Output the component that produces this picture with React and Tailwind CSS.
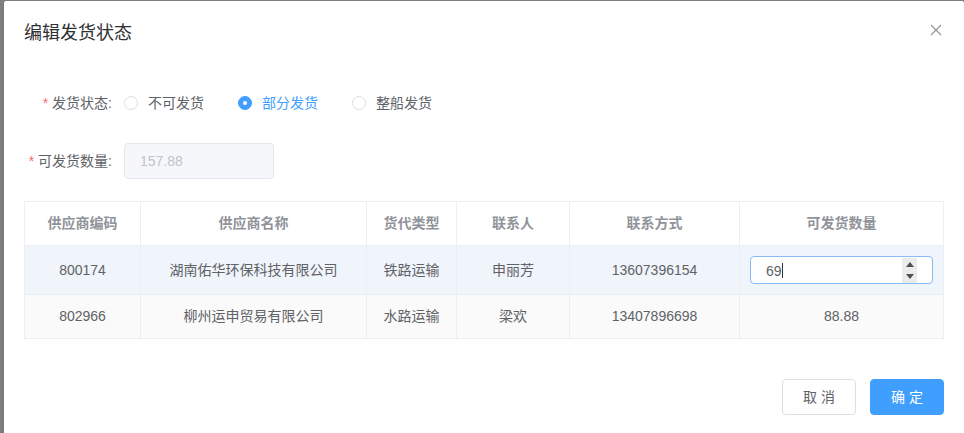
import React, { useState } from 'react';

const rows = [
  { code: '800174', name: '湖南佑华环保科技有限公司', type: '铁路运输', contact: '申丽芳', phone: '13607396154', qty: '69', editing: true },
  { code: '802966', name: '柳州运申贸易有限公司', type: '水路运输', contact: '梁欢', phone: '13407896698', qty: '88.88', editing: false },
];

const options = ['不可发货', '部分发货', '整船发货'];

function Radio({ label, checked, onClick }) {
  return (
    <label onClick={onClick} className="flex items-center mr-[34px] cursor-pointer">
      <span
        className={`w-[14px] h-[14px] rounded-full border flex items-center justify-center ${checked ? 'bg-[#409eff] border-[#409eff]' : 'bg-white border-[#dcdfe6]'}`}
      >
        {checked && <span className="w-[4px] h-[4px] rounded-full bg-white"></span>}
      </span>
      <span className={`ml-[10px] text-[14px] ${checked ? 'text-[#409eff]' : 'text-[#606266]'}`}>{label}</span>
    </label>
  );
}

function NumberInput({ value }) {
  return (
    <div className="mx-auto w-[183px] h-[28px] rounded-[4px] border border-[#86bdf5] bg-white flex items-center pl-[15px] pr-[15px]">
      <span className="flex-1 text-left text-[14px] text-[#606266] leading-none">
        {value}
        <span className="inline-block w-px h-[15px] bg-[#303133] align-[-2px]"></span>
      </span>
      <div className="w-[15px] h-[25px] bg-[#ebebeb] flex flex-col items-center justify-between py-[4px]">
        <span className="w-0 h-0 border-l-[4px] border-r-[4px] border-b-[5px] border-l-transparent border-r-transparent border-b-[#505050]"></span>
        <span className="w-0 h-0 border-l-[4px] border-r-[4px] border-t-[5px] border-l-transparent border-r-transparent border-t-[#505050]"></span>
      </div>
    </div>
  );
}

export default function App() {
  const [status, setStatus] = useState(1);

  return (
    <div className="w-[964px] h-[433px] overflow-hidden bg-[#7f7f7f] pt-px pl-[4px] font-['Liberation_Sans','Noto_Sans_CJK_SC',sans-serif]">
      <div className="w-[960px] h-[440px] bg-white rounded-[2px] shadow-md flex flex-col">
        {/* Header */}
        <div className="flex items-center justify-between pt-[20px] pl-[20px] pr-[22px] h-[44px]">
          <span className="text-[18px] leading-[24px] text-[#303133]">编辑发货状态</span>
          <button className="text-[#909399] -mt-[6px]">
            <svg width="12" height="12" viewBox="0 0 12 12" fill="none" stroke="currentColor" strokeWidth="1.1">
              <path d="M1 1L11 11M11 1L1 11" />
            </svg>
          </button>
        </div>

        {/* Form */}
        <div className="px-[20px] mt-[38px]">
          <div className="flex items-center h-[40px]">
            <div className="w-[100px] pr-[12px] text-right text-[14px] text-[#606266]">
              <span className="text-[#f56c6c] mr-[4px]">*</span>发货状态:
            </div>
            <div className="flex items-center">
              {options.map((opt, i) => (
                <Radio key={opt} label={opt} checked={status === i} onClick={() => setStatus(i)} />
              ))}
            </div>
          </div>

          <div className="flex items-center h-[36px] mt-[20px]">
            <div className="w-[100px] pr-[12px] text-right text-[14px] text-[#606266]">
              <span className="text-[#f56c6c] mr-[4px]">*</span>可发货数量:
            </div>
            <div className="w-[150px] h-[36px] rounded-[4px] border border-[#e4e7ed] bg-[#f5f7fa] flex items-center px-[15px] text-[14px] text-[#c0c4cc]">
              157.88
            </div>
          </div>

          {/* Table */}
          <table className="mt-[22px] w-[919px] table-fixed border-collapse border border-[#ebeef5] text-[14px]">
            <colgroup>
              <col className="w-[116px]" />
              <col className="w-[226px]" />
              <col className="w-[90px]" />
              <col className="w-[113px]" />
              <col className="w-[170px]" />
              <col className="w-[204px]" />
            </colgroup>
            <thead>
              <tr className="h-[44px] bg-white">
                {['供应商编码', '供应商名称', '货代类型', '联系人', '联系方式', '可发货数量'].map((h) => (
                  <th key={h} className="border border-[#ebeef5] font-bold text-[#909399] text-center">
                    {h}
                  </th>
                ))}
              </tr>
            </thead>
            <tbody>
              {rows.map((r, i) => (
                <tr key={r.code} className={`${i === 0 ? 'h-[49px] bg-[#f0f4fb]' : 'h-[44px] bg-[#fafafa]'} text-[#606266]`}>
                  <td className="border border-[#ebeef5] text-center">{r.code}</td>
                  <td className="border border-[#ebeef5] text-center">{r.name}</td>
                  <td className="border border-[#ebeef5] text-center">{r.type}</td>
                  <td className="border border-[#ebeef5] text-center">{r.contact}</td>
                  <td className="border border-[#ebeef5] text-center">{r.phone}</td>
                  <td className="border border-[#ebeef5] text-center px-[10px]">
                    {r.editing ? <NumberInput value={r.qty} /> : r.qty}
                  </td>
                </tr>
              ))}
            </tbody>
          </table>
        </div>

        {/* Footer */}
        <div className="flex justify-end gap-[14px] px-[20px] mt-[40px]">
          <button className="w-[74px] h-[36px] rounded-[4px] border border-[#dcdfe6] bg-white text-[14px] text-[#606266]">
            取 消
          </button>
          <button className="w-[74px] h-[36px] rounded-[4px] border border-[#409eff] bg-[#409eff] text-[14px] text-white">
            确 定
          </button>
        </div>
      </div>
    </div>
  );
}
